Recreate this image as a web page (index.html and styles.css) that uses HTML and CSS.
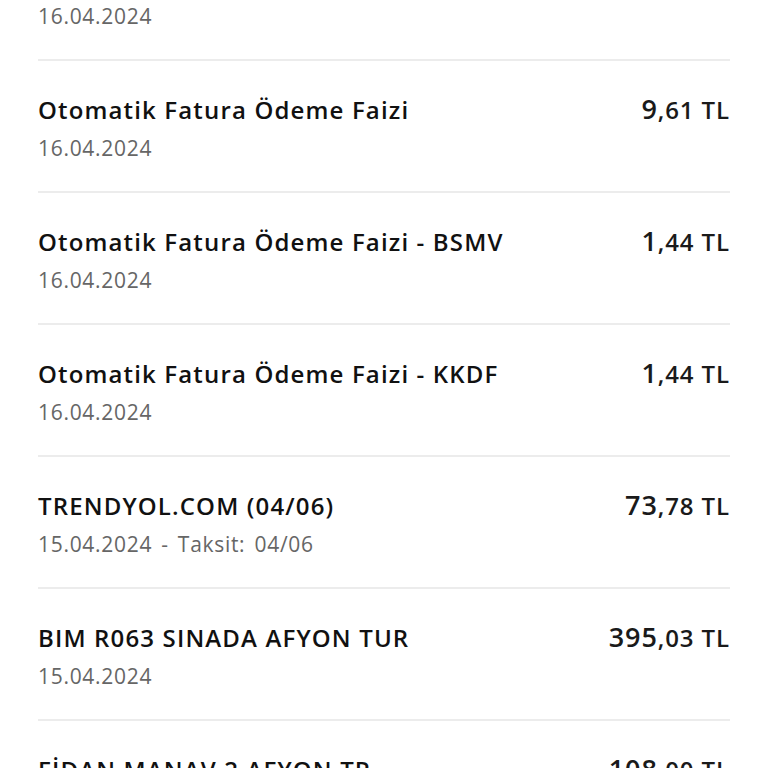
FILE: index.html
```html
<!DOCTYPE html>
<html lang="tr">
<head>
<meta charset="utf-8">
<link rel="stylesheet" href="styles.css">
</head>
<body>
<ul class="list">
  <li class="row">
    <div class="info"><div class="title">Otomatik Fatura Ödeme Faizi</div><div class="date">16.04.2024</div></div>
    <div class="amount"><span class="int">9</span><span class="dec">,61 TL</span></div>
  </li>
  <li class="row">
    <div class="info"><div class="title">Otomatik Fatura Ödeme Faizi</div><div class="date">16.04.2024</div></div>
    <div class="amount"><span class="int">9</span><span class="dec">,61 TL</span></div>
  </li>
  <li class="row">
    <div class="info"><div class="title">Otomatik Fatura Ödeme Faizi - BSMV</div><div class="date">16.04.2024</div></div>
    <div class="amount"><span class="int">1</span><span class="dec">,44 TL</span></div>
  </li>
  <li class="row">
    <div class="info"><div class="title">Otomatik Fatura Ödeme Faizi - KKDF</div><div class="date">16.04.2024</div></div>
    <div class="amount"><span class="int">1</span><span class="dec">,44 TL</span></div>
  </li>
  <li class="row">
    <div class="info"><div class="title">TRENDYOL.COM (04/06)</div><div class="date">15.04.2024 - Taksit: 04/06</div></div>
    <div class="amount"><span class="int">73</span><span class="dec">,78 TL</span></div>
  </li>
  <li class="row">
    <div class="info"><div class="title">BIM R063 SINADA AFYON TUR</div><div class="date">15.04.2024</div></div>
    <div class="amount"><span class="int">395</span><span class="dec">,03 TL</span></div>
  </li>
  <li class="row">
    <div class="info"><div class="title">FİDAN MANAV 2 AFYON TR</div><div class="date">15.04.2024</div></div>
    <div class="amount"><span class="int">108</span><span class="dec">,00 TL</span></div>
  </li>
</ul>
</body>
</html>
```
FILE: styles.css
```css
html, body {
  margin: 0;
  padding: 0;
  background: #ffffff;
  overflow: hidden;
  height: 768px;
}
body {
  font-family: "Open Sans", "Noto Sans", sans-serif;
  color: #111111;
}
.list {
  list-style: none;
  margin: -71px 0 0 0;
  padding: 0 38px;
}
.row {
  display: flex;
  justify-content: space-between;
  align-items: flex-start;
  height: 130px;
  border-bottom: 2px solid #ececec;
  box-sizing: content-box;
}
.info {
  display: flex;
  flex-direction: column;
  padding-top: 33px;
}
.title {
  font-size: 24px;
  line-height: 32px;
  font-weight: 600;
  color: #111111;
  letter-spacing: 1.15px;
}
.date {
  font-size: 21px;
  line-height: 30px;
  margin-top: 7px;
  color: #666666;
  letter-spacing: 0.7px;
  word-spacing: 3px;
}
.amount {
  padding-top: 31px;
  font-weight: 600;
  color: #1a1a1a;
  white-space: nowrap;
  line-height: 34px;
  letter-spacing: 0.9px;
}
.int {
  font-size: 27px;
}
.dec {
  font-size: 24px;
}
```
